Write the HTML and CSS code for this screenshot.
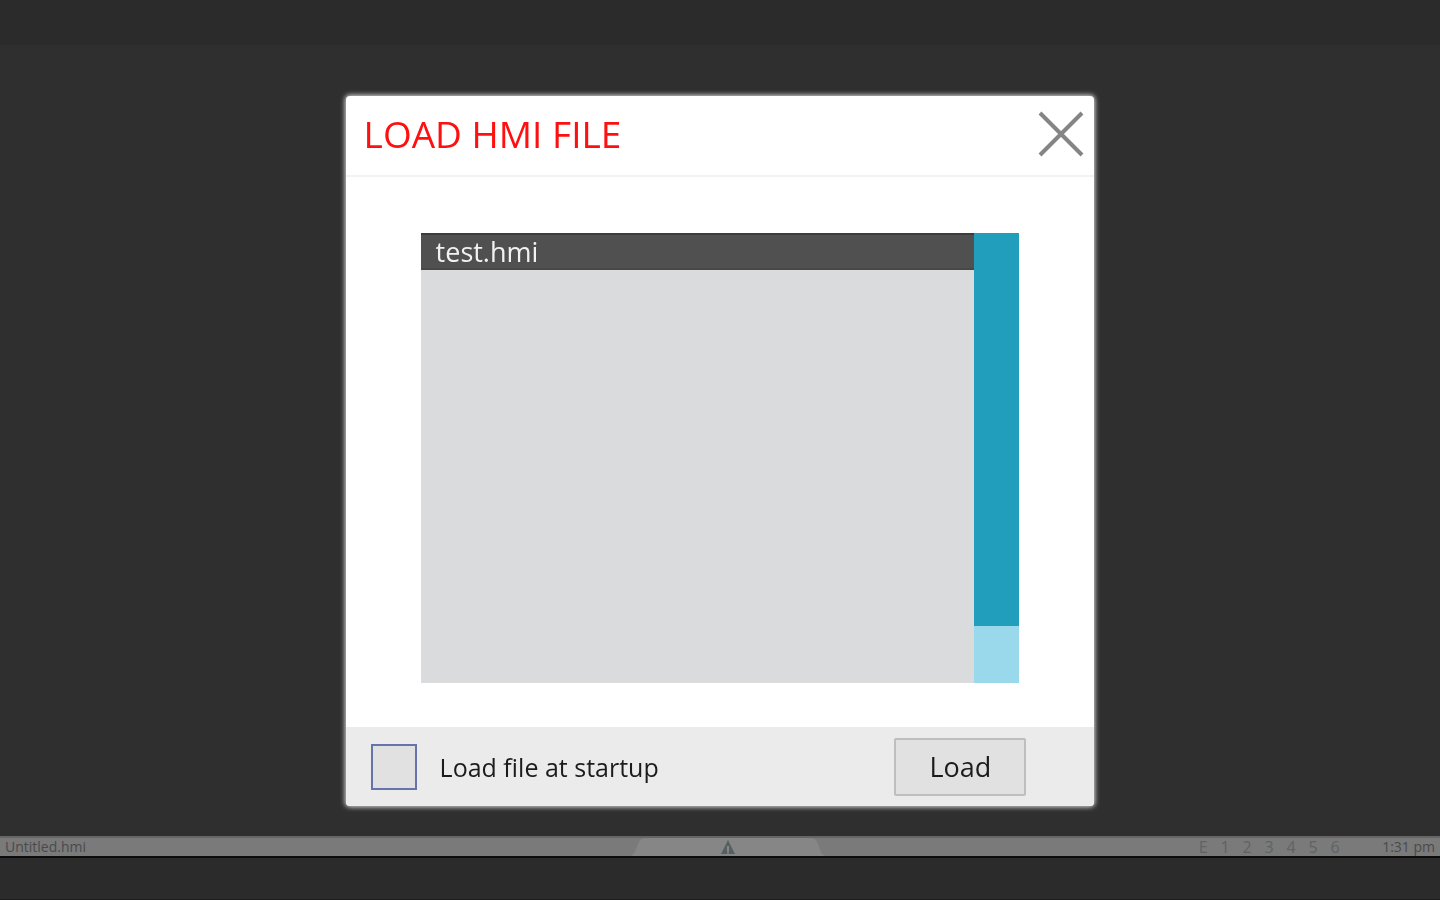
FILE: index.html
```
<!DOCTYPE html>
<html lang="en">
<head>
  <meta charset="UTF-8">
  <title>Load HMI File</title>
  <link rel="stylesheet" href="styles.css">
</head>
<body>
  <div class="top-bar"></div>
  <main class="workspace"></main>

  <footer class="status-bar">
    <span class="file-name">Untitled.hmi</span>
    <button class="drawer-handle" aria-label="Open drawer">
      <svg class="drawer-shape" viewBox="0 0 194 18" preserveAspectRatio="none">
        <path d="M0 18 C7 15 5 0 14 0 H180 C189 0 187 15 194 18 Z" fill="#868686"/>
      </svg>
      <svg class="drawer-icon" viewBox="0 0 16 16">
        <path d="M8 1 L15 15 H9 L8 12 L7 15 H1 Z" fill="#566060"/>
        <path d="M8 7 V13" stroke="#868686" stroke-width="2"/>
      </svg>
    </button>
    <div class="status-right">
      <div class="pages">
        <span>E</span><span>1</span><span>2</span><span>3</span><span>4</span><span>5</span><span>6</span>
      </div>
      <span class="clock">1:31 pm</span>
    </div>
  </footer>
  <div class="bottom-bar"></div>

  <div class="overlay">
    <section class="dialog" role="dialog" aria-labelledby="dialogTitle">
      <header class="dialog-header">
        <h1 id="dialogTitle">LOAD HMI FILE</h1>
        <button class="close" aria-label="Close">
          <svg viewBox="0 0 46 46">
            <path d="M2 2 L44 44 M44 2 L2 44" stroke="#858585" stroke-width="4" fill="none"/>
          </svg>
        </button>
      </header>

      <div class="dialog-body">
        <div class="file-list">
          <ul class="files">
            <li><button class="file selected">test.hmi</button></li>
          </ul>
          <div class="scrollbar"><div class="scroll-thumb"></div></div>
        </div>
      </div>

      <div class="dialog-footer">
        <input type="checkbox" id="startup">
        <label for="startup">Load file at startup</label>
        <button class="load">Load</button>
      </div>
    </section>
  </div>
</body>
</html>
```
FILE: styles.css
```
* {
  box-sizing: border-box;
}
body {
  margin: 0;
  min-height: 100vh;
  display: flex;
  flex-direction: column;
  background-color: #2f2f2f;
  font-family: "Open Sans", "Noto Sans", sans-serif;
}
button {
  border: none;
  padding: 0;
  font-family: inherit;
  cursor: pointer;
}
.top-bar {
  height: 45px;
  background-color: #2b2b2b;
}
.workspace {
  flex: 1;
}

/* Status bar */
.status-bar {
  display: grid;
  grid-template-columns: 77fr 194px 75fr;
  align-items: center;
  height: 22px;
  padding: 0 5px;
  background-color: #7a7a7a;
  border-top: 2px solid #666;
  border-bottom: 2px solid #0c0c0c;
  color: #4a4a4a;
  font-size: 14px;
  line-height: 18px;
}
.drawer-handle {
  position: relative;
  display: flex;
  justify-content: center;
  align-items: center;
  height: 18px;
  background: none;
}
.drawer-shape {
  position: absolute;
  inset: 0;
  width: 100%;
  height: 100%;
}
.drawer-icon {
  position: relative;
  width: 16px;
  height: 16px;
}
.status-right {
  display: flex;
  justify-content: flex-end;
  gap: 36px;
}
.pages {
  display: flex;
  color: #5c6466;
  font-size: 16px;
}
.pages span {
  width: 22px;
  text-align: center;
}
.bottom-bar {
  height: 42px;
  background-color: #2b2b2b;
  border-bottom: 1px solid #1c1c1c;
}

/* Dialog */
.overlay {
  position: fixed;
  inset: 0;
  display: flex;
  justify-content: center;
  align-items: center;
  padding-top: 2px;
}
.dialog {
  width: 52%;
  background-color: #fff;
  border-radius: 4px;
  box-shadow: 0 0 5px 1px #ddd;
}
.dialog-header {
  display: flex;
  justify-content: space-between;
  align-items: center;
  height: 81px;
  padding: 0 10px 4px 18px;
  border-bottom: 2px solid #f2f2f2;
}
.dialog-header h1 {
  margin: 0;
  color: #ff1010;
  font-size: 37px;
  font-weight: 400;
}
.close {
  width: 46px;
  height: 46px;
  background: none;
}
.close svg {
  display: block;
}
.dialog-body {
  padding: 56px 75px 44px;
}
.file-list {
  display: flex;
  height: 450px;
  background-color: #d9dbdc;
}
.files {
  flex: 1;
  margin: 0;
  padding: 0;
  list-style: none;
}
.file {
  display: block;
  width: 100%;
  height: 37px;
  padding: 0 15px;
  background: none;
  font-size: 27px;
  line-height: 32px;
  text-align: left;
}
.file.selected {
  background-color: #505050;
  border-top: 2px solid #3c3c3c;
  border-bottom: 2px solid #484848;
  color: #f2f2f2;
  font-weight: 500;
}
.scrollbar {
  width: 45px;
  background-color: #9ad9eb;
}
.scroll-thumb {
  height: 393px;
  background-color: #219ebc;
}
.dialog-footer {
  display: flex;
  align-items: center;
  height: 79px;
  padding: 0 68px 0 25px;
  background-color: #ebebeb;
  border-radius: 0 0 4px 4px;
}
#startup {
  appearance: none;
  width: 46px;
  height: 46px;
  margin: 0 23px 0 0;
  background-color: #e1e1e1;
  border: 2px solid #6674ad;
}
#startup:checked {
  background-color: #6674ad;
}
.dialog-footer label {
  color: #1c1c1c;
  font-size: 25px;
}
.load {
  width: 132px;
  height: 58px;
  margin-left: auto;
  background-color: #e1e1e1;
  border: 2px solid #bebebe;
  border-radius: 2px;
  color: #1c1c1c;
  font-size: 27px;
}
```
